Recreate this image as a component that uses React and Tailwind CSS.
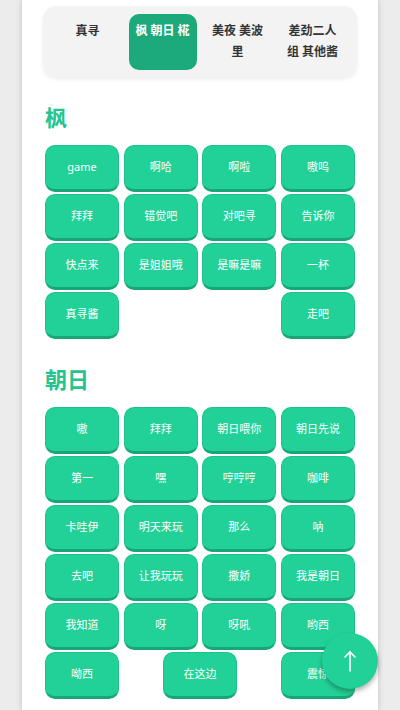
import React from "react";

const tabs = ["真寻", "枫 朝日 椛", "美夜 美波里", "差劲二人组 其他酱"];

const sections = [
    {
        title: "枫",
        items: ["game", "啊哈", "啊啦", "嗷呜", "拜拜", "错觉吧", "对吧寻", "告诉你", "快点来", "是姐姐哦", "是嘛是嘛", "一杯", "真寻酱", "走吧"],
    },
    {
        title: "朝日",
        items: ["嗷", "拜拜", "朝日喂你", "朝日先说", "第一", "嘿", "哼哼哼", "咖啡", "卡哇伊", "明天来玩", "那么", "呐", "去吧", "让我玩玩", "撒娇", "我是朝日", "我知道", "呀", "呀吼", "哟西", "呦西", "在这边", "震惊"],
    },
];

function SoundButton({ label }) {
    return (
        <button className="w-[74px] h-[47px] mb-[2px] rounded-[10px] bg-[#22d197] border border-[#1fc08b] border-b-[3px] border-b-[#17a677] text-white text-[11px] flex items-center justify-center">
            {label}
        </button>
    );
}

export default function App() {
    return (
        <div className="min-h-screen bg-[#ececec] flex justify-center" style={{ fontFamily: "'Noto Sans', 'Noto Sans CJK SC', sans-serif" }}>
            <div className="w-[356px] min-h-screen bg-white shadow-[0_0_6px_rgba(0,0,0,0.18)] px-[23px] pt-[6px] relative">
                {/* Tab bar */}
                <div className="-mx-[2px] h-[71px] rounded-[14px] bg-[#f2f3f2] shadow-[0_2px_4px_rgba(0,0,0,0.08)] grid grid-cols-4 px-[7px] py-[8px]">
                    {tabs.map((t, i) => (
                        <div key={t} className="flex justify-center">
                            <div
                                className={
                                    i === 1
                                        ? "w-[68px] h-[56px] rounded-[10px] bg-[#1ca97b] text-white text-[12px] font-bold text-center leading-[21px] px-[4px] pt-[6px]"
                                        : "w-[68px] h-[56px] text-[#333] text-[12px] font-bold text-center leading-[21px] px-[6px] pt-[6px]"
                                }
                            >
                                {t}
                            </div>
                        </div>
                    ))}
                </div>

                {sections.map((s, idx) => (
                    <section key={s.title} className={idx === 0 ? "pt-[25px]" : "pt-[23px]"}>
                        <h2 className="text-[22px] leading-[30px] font-bold text-[#25c48f] mb-[13px]">{s.title}</h2>
                        <div className="flex flex-wrap justify-between">
                            {s.items.map((it, j) => (
                                <SoundButton key={j} label={it} />
                            ))}
                        </div>
                    </section>
                ))}
            </div>

            {/* scroll to top */}
            <button className="fixed left-[322px] top-[633px] w-[56px] h-[56px] rounded-full bg-[#22d197] shadow-[0_3px_5px_rgba(0,0,0,0.3)] flex items-center justify-center">
                <svg width="14" height="22" viewBox="0 0 14 22" fill="none" stroke="white" strokeWidth="1.6" strokeLinecap="round">
                    <path d="M7 21V2" />
                    <path d="M2 7L7 2l5 5" />
                </svg>
            </button>
        </div>
    );
}
